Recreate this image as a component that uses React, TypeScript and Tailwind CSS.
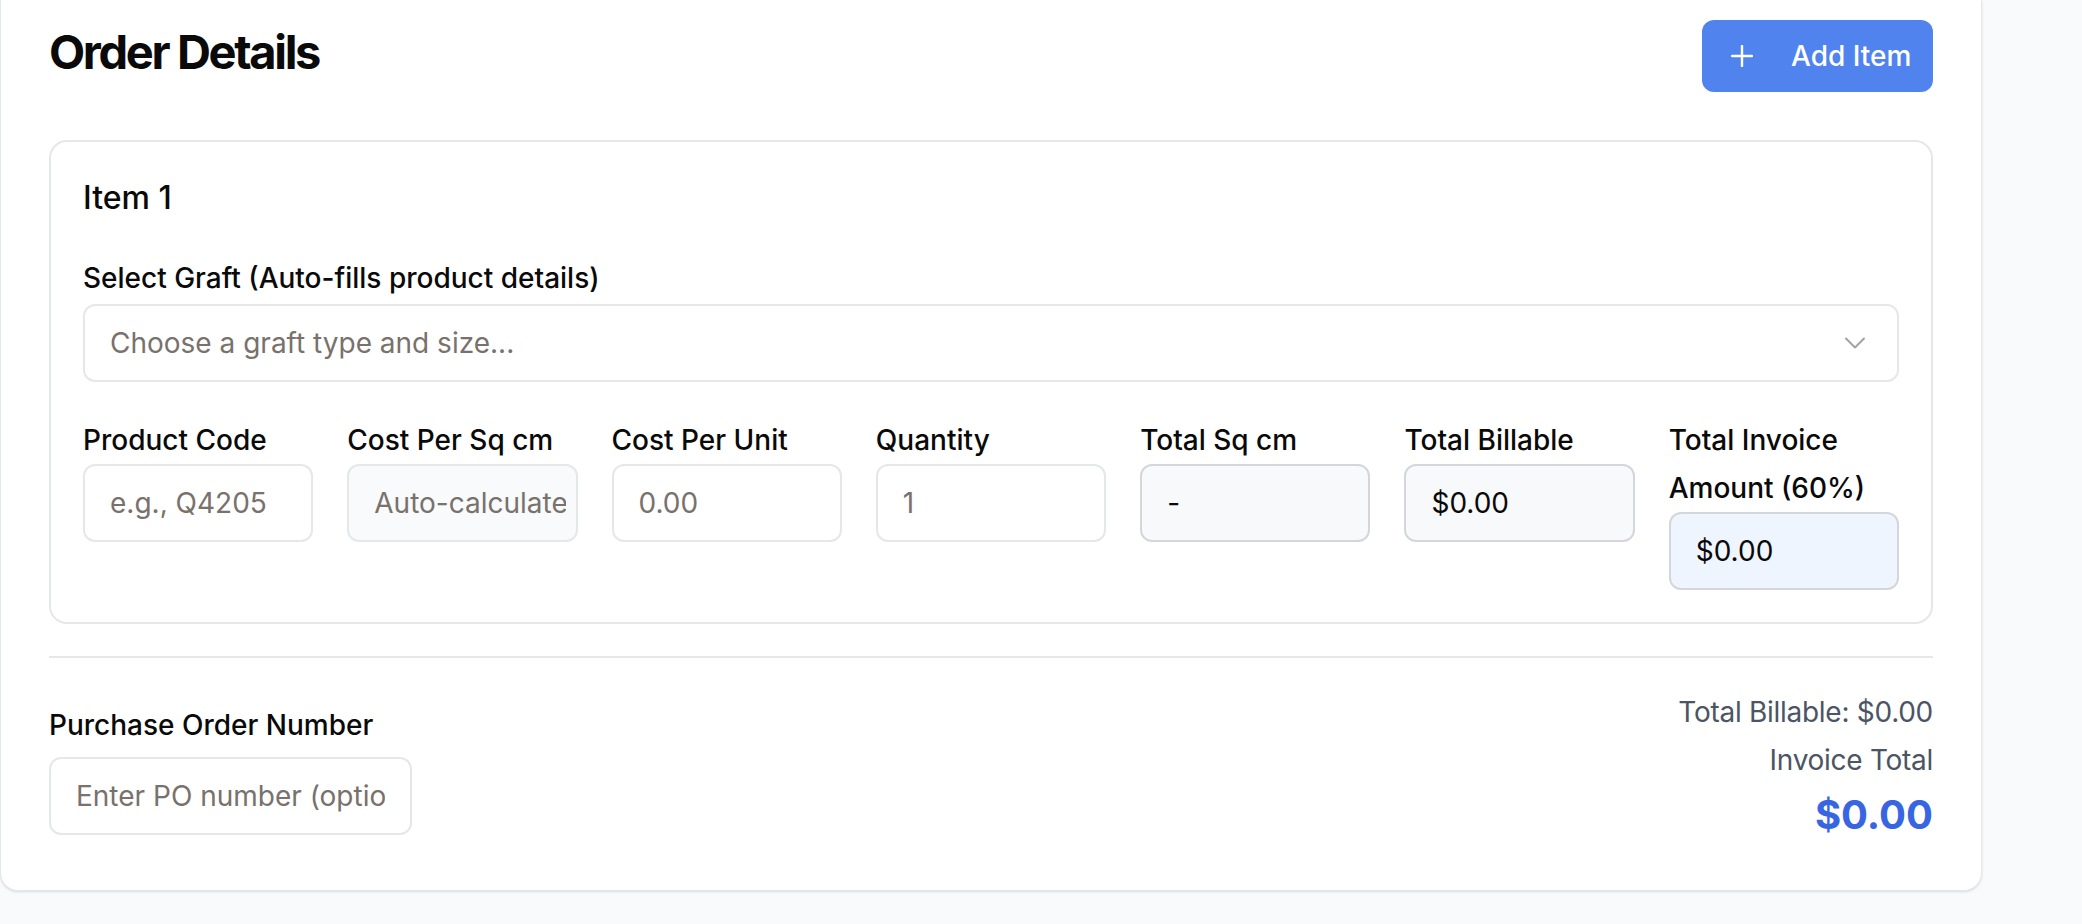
import { ChevronDown } from "lucide-react";

type Field = {
  label: string;
  placeholder?: string;
  value?: string;
  tone: "plain" | "muted" | "readonly" | "invoice";
};

const fields: Field[] = [
  { label: "Product Code", placeholder: "e.g., Q4205", tone: "plain" },
  { label: "Cost Per Sq cm", placeholder: "Auto-calculated", tone: "muted" },
  { label: "Cost Per Unit", placeholder: "0.00", tone: "plain" },
  { label: "Quantity", placeholder: "1", tone: "plain" },
  { label: "Total Sq cm", value: "-", tone: "readonly" },
  { label: "Total Billable", value: "$0.00", tone: "readonly" },
  { label: "Total Invoice Amount (60%)", value: "$0.00", tone: "invoice" },
];

const toneClass = {
  plain: "bg-white border-[#e5e7eb]",
  muted: "bg-[#f9fafb] border-[#e5e7eb]",
  readonly: "bg-[#f8f9fb] border-[#d4d6db]",
  invoice: "bg-[#eff5fe] border-[#d4d6db]",
};

export default function App() {
  return (
    <div className="min-h-screen bg-[#f9fafb] font-['Inter',sans-serif] text-[#0a0a0a]">
      <div className="w-[1982px] bg-white border-x border-b border-[#e5e7eb] rounded-b-[18px] shadow-sm px-12 pt-5 pb-[47px]">
        {/* header */}
        <div className="flex justify-between items-start mb-12">
          <h2 className="text-[47px] leading-[64px] font-bold tracking-[-0.05em]">
            Order Details
          </h2>
          <button className="h-[72px] w-[231px] rounded-[12px] bg-[#5183ef] text-white flex items-center pl-[29px] gap-[38px]">
            <svg width="22" height="22" viewBox="0 0 22 22">
              <path
                d="M11 1v20M1 11h20"
                stroke="white"
                strokeWidth="2.4"
                strokeLinecap="round"
              />
            </svg>
            <span className="text-[28px] font-medium">Add Item</span>
          </button>
        </div>

        {/* item card */}
        <div className="border-2 border-[#e5e7eb] rounded-[18px] p-8">
          <h3 className="text-[32px] leading-[48px] font-medium mb-8">Item 1</h3>
          <label className="block text-[28px] leading-[48px] font-medium mb-[2px]">
            Select Graft (Auto-fills product details)
          </label>
          <div className="h-[78px] border-2 border-[#e5e7eb] rounded-[12px] flex items-center justify-between pl-[25px] pr-[24px]">
            <span className="text-[28px] text-[#78716c]">
              Choose a graft type and size...
            </span>
            <ChevronDown size={36} strokeWidth={1.4} className="text-[#a3a3a3]" />
          </div>

          <div className="grid grid-cols-7 gap-x-[34px] mt-[34px] items-start">
            {fields.map((f) => (
              <div key={f.label} className="min-w-0">
                <label className="block text-[28px] leading-[48px] font-medium">
                  {f.label}
                </label>
                <input
                  readOnly
                  className={`w-full h-[78px] border-2 rounded-[12px] pl-[25px] pr-[10px] text-[28px] text-[#0a0a0a] placeholder:text-[#78716c] outline-none ${toneClass[f.tone]}`}
                  placeholder={f.placeholder}
                  value={f.value ?? ""}
                />
              </div>
            ))}
          </div>
        </div>

        {/* totals */}
        <div className="mt-8 border-t-2 border-[#e5e7eb] pt-[30px] flex justify-between items-start">
          <div className="mt-[13px]">
            <label className="block text-[28px] leading-[48px] font-medium mb-2">
              Purchase Order Number
            </label>
            <input
              className="w-[363px] h-[78px] border-2 border-[#e5e7eb] rounded-[12px] px-[25px] text-[28px] placeholder:text-[#78716c] outline-none"
              placeholder="Enter PO number (optional)"
            />
          </div>
          <div className="text-right">
            <div className="text-[28px] leading-[48px] text-[#4b5563] tracking-[-0.01em]">
              Total Billable: $0.00
            </div>
            <div className="text-[28px] leading-[48px] text-[#4b5563] tracking-[-0.01em]">
              Invoice Total
            </div>
            <div className="mt-[3px] text-[40px] leading-[56px] font-bold text-[#3866e2]">
              $0.00
            </div>
          </div>
        </div>
      </div>
    </div>
  );
}
